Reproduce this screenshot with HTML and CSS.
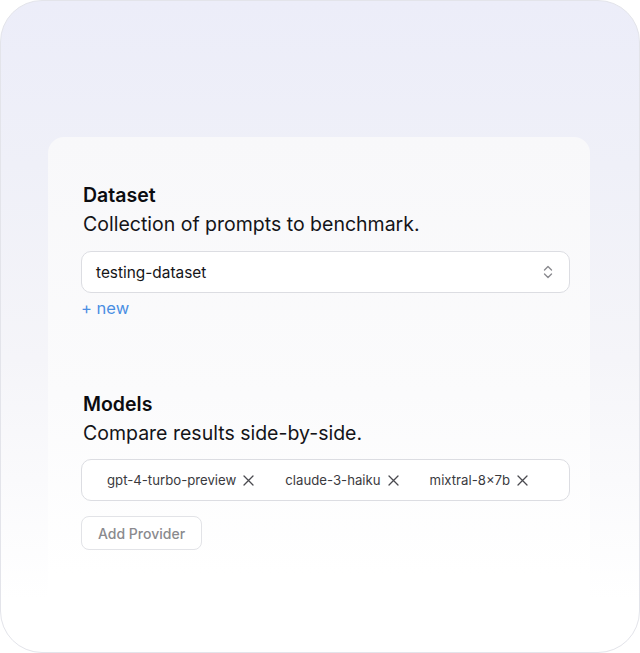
FILE: index.html
```html
<!DOCTYPE html>
<html>
<head>
<meta charset="utf-8">
<link rel="stylesheet" href="styles.css">
</head>
<body>
<div class="frame">
  <div class="card">
    <section class="group">
      <h2 class="title">Dataset</h2>
      <p class="desc">Collection of prompts to benchmark.</p>
      <div class="field select">
        <span class="value">testing-dataset</span>
        <svg class="chev" width="12" height="16" viewBox="0 0 12 16" fill="none" stroke="#8a8a8f" stroke-width="1.4" stroke-linecap="round" stroke-linejoin="round"><path d="M2.5 6 6 2.5 9.5 6"/><path d="M2.5 10 6 13.5 9.5 10"/></svg>
      </div>
      <a class="new">+ new</a>
    </section>
    <section class="group models">
      <h2 class="title">Models</h2>
      <p class="desc">Compare results side-by-side.</p>
      <div class="field tags">
        <span class="tag">gpt-4-turbo-preview<svg class="x" width="11" height="11" viewBox="0 0 11 11" stroke="#4a4a4f" stroke-width="1.3" stroke-linecap="round"><path d="M1 1 10 10M10 1 1 10"/></svg></span>
        <span class="tag">claude-3-haiku<svg class="x" width="11" height="11" viewBox="0 0 11 11" stroke="#4a4a4f" stroke-width="1.3" stroke-linecap="round"><path d="M1 1 10 10M10 1 1 10"/></svg></span>
        <span class="tag">mixtral-8×7b<svg class="x" width="11" height="11" viewBox="0 0 11 11" stroke="#4a4a4f" stroke-width="1.3" stroke-linecap="round"><path d="M1 1 10 10M10 1 1 10"/></svg></span>
      </div>
      <button class="add">Add Provider</button>
    </section>
  </div>
</div>
</body>
</html>
```
FILE: styles.css
```css
* { box-sizing: border-box; }
html, body { margin: 0; padding: 0; background: #ffffff; }
body { font-family: Inter, "Noto Sans", sans-serif; color: #111114; }

.frame {
  width: 640px;
  height: 653px;
  border: 1px solid #e3e4ea;
  border-radius: 42px;
  background: linear-gradient(180deg, #ecedf9 0%, #eff0f8 25%, #f5f5f9 55%, #ffffff 92%);
  padding: 136px 49px 0 47px;
  overflow: hidden;
}

.card {
  height: 100%;
  border-radius: 16px 16px 0 0;
  background: linear-gradient(180deg, #f8f8fa 0%, #fbfbfc 50%, #ffffff 85%);
  padding: 45px 20px 0 35px;
}

.group { display: flex; flex-direction: column; align-items: flex-start; }
.models { margin-top: 73px; }

.title {
  margin: 0;
  font-size: 19.5px;
  line-height: 26px;
  font-weight: 600;
  color: #0c0c10;
}
.desc {
  margin: 0;
  font-size: 19.5px;
  line-height: 32px;
  font-weight: 400;
  color: #141418;
}

.field {
  align-self: stretch;
  margin-left: -2px;
  height: 42px;
  border: 1px solid #dcdde2;
  border-radius: 10px;
  background: #ffffff;
  display: flex;
  align-items: center;
  margin-top: 11px;
}
.select { padding: 0 15px 0 14px; justify-content: space-between; }
.value { font-size: 15.4px; color: #151518; }
.chev { display: block; }

.new {
  margin-top: 5px;
  margin-left: -2px;
  font-size: 16.5px;
  line-height: 20px;
  color: #4a8fe3;
}

.tags { padding: 0 25px; gap: 31px; margin-top: 10px; }
.tag {
  display: flex;
  align-items: center;
  gap: 7px;
  font-size: 13.2px;
  color: #3a3a3e;
  white-space: nowrap;
  flex-shrink: 0;
}
.x { display: block; flex-shrink: 0; }

.add {
  margin-top: 15px;
  margin-left: -2px;
  height: 34px;
  padding: 0 16px;
  border: 1px solid #e2e3e7;
  border-radius: 8px;
  background: #ffffff;
  font-family: Inter, "Noto Sans", sans-serif;
  font-size: 14px;
  font-weight: 500;
  color: #8a8a8e;
}
```
